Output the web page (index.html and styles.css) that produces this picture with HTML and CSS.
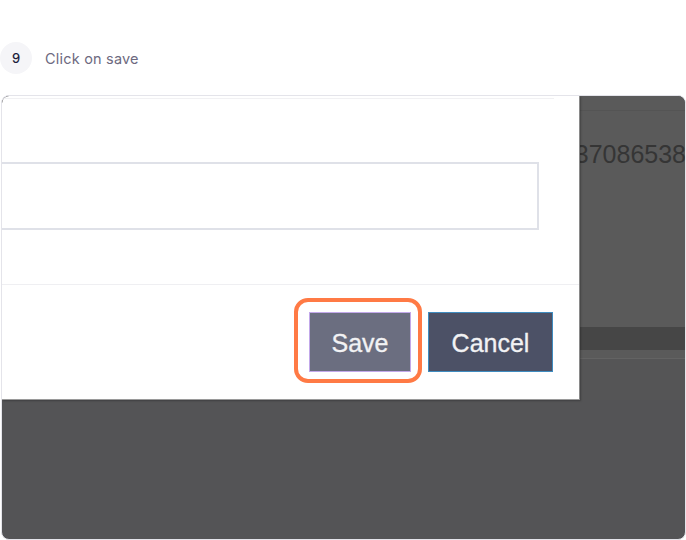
FILE: index.html
```html
<!DOCTYPE html>
<html>
<head>
<meta charset="utf-8">
<link rel="stylesheet" href="styles.css">
</head>
<body>
<div class="step">
  <div class="badge">9</div>
  <div class="step-text">Click on save</div>
</div>
<div class="frame">
  <div class="top">
    <div class="modal">
      <div class="modal-topline"></div>
      <div class="modal-body">
        <div class="input"></div>
      </div>
      <div class="modal-footer">
        <div class="highlight">
          <button class="btn btn-save">Save</button>
        </div>
        <button class="btn btn-cancel">Cancel</button>
      </div>
    </div>
    <div class="side">
      <div class="side-line"></div>
      <div class="side-num">37086538</div>
      <div class="side-spacer"></div>
      <div class="side-band"></div>
      <div class="side-gap"></div>
      <div class="side-line2"></div>
      <div class="side-rest"></div>
    </div>
  </div>
</div>
</body>
</html>
```

FILE: styles.css
```css
html, body {
  margin: 0;
  padding: 0;
  background: #ffffff;
}
body {
  width: 686px;
  height: 540px;
  overflow: hidden;
  font-family: Inter, "Noto Sans", sans-serif;
}
.step {
  display: flex;
  align-items: center;
  height: 32px;
  margin-top: 42px;
  margin-bottom: 21px;
}
.badge {
  width: 32px;
  height: 32px;
  border-radius: 50%;
  background: #f5f5f8;
  color: #1d1d3d;
  font-size: 13px;
  font-weight: 500;
  display: flex;
  align-items: center;
  justify-content: center;
}
.step-text {
  margin-left: 13px;
  font-size: 14.5px;
  color: #6d6a80;
  letter-spacing: 0.2px;
}
.frame {
  margin-left: 1px;
  width: 683px;
  height: 443px;
  border: 1px solid #e4e4ea;
  border-radius: 8px;
  background: #545456;
  overflow: hidden;
}
.top {
  display: flex;
  height: 304px;
}
.modal {
  position: relative;
  z-index: 1;
  width: 577px;
  background: #ffffff;
  border-right: 1px solid #8a8a8a;
  border-bottom: 1px solid #9a9a9a;
  box-shadow: 1px 1px 2px rgba(0,0,0,0.25);
  display: flex;
  flex-direction: column;
  border-top-left-radius: 7px;
}
.modal-topline {
  height: 1px;
  width: 552px;
  margin-top: 2px;
  background: #f1f1f3;
}
.modal-body {
  height: 186px;
  padding-top: 63px;
  box-sizing: border-box;
  border-bottom: 1px solid #efeff2;
}
.input {
  width: 537px;
  height: 64px;
  margin-left: -2px;
  border: 2px solid #dfe1e8;
  border-left: none;
}
.modal-footer {
  display: flex;
  align-items: flex-start;
  padding-top: 13px;
  padding-left: 292px;
}
.highlight {
  border: 4px solid #ff7a45;
  border-radius: 14px;
  padding: 10px 7px 7px 11px;
}
.btn {
  font-family: "Liberation Sans", Arial, sans-serif;
  font-size: 25px;
  color: #f2f2f4;
  height: 60px;
  border-radius: 0;
  padding: 2px 0 0 0;
  display: flex;
  align-items: center;
  justify-content: center;
  -webkit-text-stroke: 0.3px #f2f2f4;
}
.btn-save {
  width: 102px;
  background: #6b6e80;
  border: 1px solid #c2a8ea;
}
.btn-cancel {
  margin-top: 14px;
  margin-left: 6px;
  width: 125px;
  background: #4c5166;
  border: 1px solid #3f8cc0;
}
.side {
  flex: 1;
  min-width: 0;
  background: #5a5a5a;
  display: flex;
  flex-direction: column;
}
.side-line {
  height: 1px;
  margin-top: 14px;
  background: #545454;
}
.side-num {
  display: flex;
  justify-content: flex-end;
  white-space: nowrap;
  font-family: "Liberation Sans", Arial, sans-serif;
  font-size: 25px;
  color: #353535;
  margin-top: 29px;
  line-height: 28px;
  margin-right: -1px;
}
.side-spacer {
  flex: 0 0 159px;
}
.side-band {
  flex: 0 0 23px;
  background: #464646;
}
.side-gap {
  flex: 0 0 8px;
}
.side-line2 {
  height: 1px;
  background: #636363;
}
.side-rest {
  flex: 1;
  background: #555556;
}
```
